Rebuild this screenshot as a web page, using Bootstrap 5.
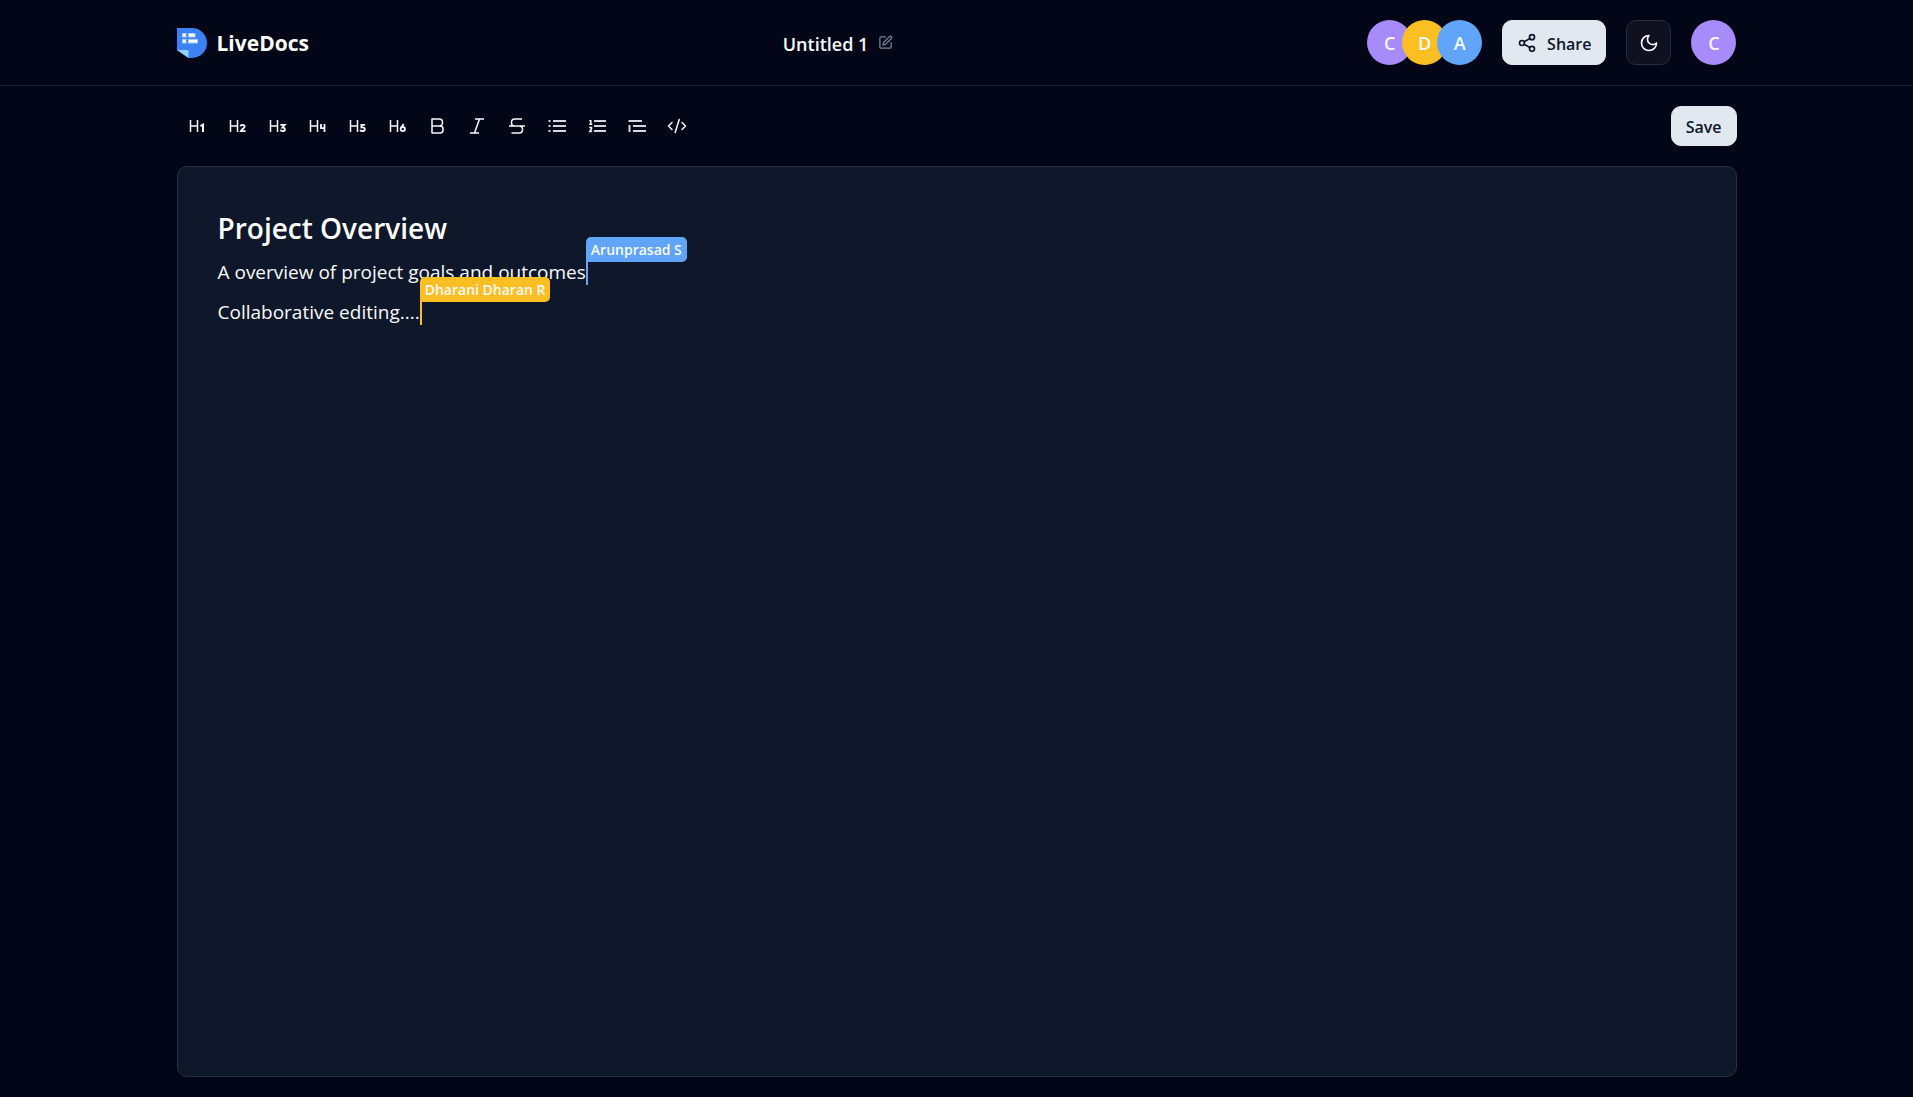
<!DOCTYPE html>
<html lang="en" data-bs-theme="dark">
<head>
<meta charset="utf-8">
<meta name="viewport" content="width=device-width, initial-scale=1">
<title>LiveDocs</title>
<link href="https://cdn.jsdelivr.net/npm/bootstrap@5.3.0/dist/css/bootstrap.min.css" rel="stylesheet">
<style>
  body { background: #020617; color: #f8fafc; font-family: "Open Sans", "Noto Sans", sans-serif; font-size: 18px; }
  svg { display: block; flex: none; }
  .page-wrap { width: 100%; max-width: 1600px; padding: 0 20px; margin: 0 auto; }
  .topbar { border-bottom: 1px solid #1b2031; padding: 20px 0; }
  .toolrow { padding: 20px 0; }
  .gap-md { gap: 20px; }
  .gap-sm { gap: 10px; }
  .brand { color: #fff; font-size: 21px; font-weight: 700; line-height: 30px; }
  .doc-title { font-size: 18px; font-weight: 600; line-height: 30px; }
  .text-drop { padding-top: 2px; }
  .avatar { width: 45px; height: 45px; font-size: 18px; font-weight: 600; line-height: 28px; color: #f8fafc; }
  .avatar + .avatar { margin-left: -10px; }
  .violet { background: #a78bfa; }
  .amber { background: #fbbf24; }
  .azure { background: #60a5fa; }
  .btn { --bs-btn-font-weight: 600; --bs-btn-font-size: 16px; --bs-btn-border-radius: 10px; }
  .btn-pale { --bs-btn-color: #0f172a; --bs-btn-bg: #e2e8f0; --bs-btn-border-color: #e2e8f0; --bs-btn-hover-bg: #cbd5e1; --bs-btn-hover-color: #0f172a; --bs-btn-padding-x: 14px; --bs-btn-padding-y: 0; }
  .btn-share { height: 45px; }
  .btn-save { height: 40px; }
  .btn-theme { width: 45px; height: 45px; --bs-btn-color: #f8fafc; --bs-btn-bg: #0f1120; --bs-btn-border-color: #2a2d3c; }
  .btn-tool { width: 40px; height: 40px; --bs-btn-color: #f8fafc; --bs-btn-hover-bg: #1e293b; --bs-btn-hover-color: #fff; }
  .btn-tool svg { fill: none; stroke: currentColor; stroke-width: 1.5; }
  .btn-tool .bars { stroke: #d6d8de; stroke-width: 2; }
  .shell { min-height: 100vh; }
  .sheet { background: #0f172a; border: 1px solid #283142; border-radius: 10px; padding: 40px; margin-bottom: 20px; outline: 0; }
  .sheet h1 { font-size: 28px; font-weight: 600; line-height: 42px; margin: 0 0 8px; color: #fff; }
  .sheet p { font-size: 19px; line-height: 30px; margin: 0 0 10px; }
  .caret { position: relative; border-left: 2px solid var(--who); }
  .caret-name { position: absolute; left: -2px; bottom: calc(100% - 3px); background: var(--who); color: #f8fafc; font-size: 14px; font-weight: 600; line-height: 25px; padding: 0 5px; border-radius: 5px 5px 5px 0; white-space: nowrap; }
  .who-azure { --who: #60a5fa; }
  .who-amber { --who: #fbbf24; }
</style>
</head>
<body>
<div class="shell d-flex flex-column">
  <header class="topbar">
    <div class="page-wrap d-flex justify-content-between align-items-center">
      <a href="#" class="brand d-flex align-items-center gap-sm text-decoration-none">
        <svg width="30" height="30" viewBox="0 0 30 30" aria-hidden="true">
          <path fill="#3b82f6" d="M0 0H15A15 15 0 0 1 15 30H11.500L0 22Z"/>
          <path fill="#93d0fb" d="M0 22H11.500V30Z"/>
          <path fill="#a9cbfc" d="M5 5h4.500v4.500H5zM11 5h7.500v4.500H11zM5 11h4.500v4.500H5zM11 11h10v4.500H11z"/>
          <path fill="#fff" d="M6 6h2.500v2.500H6zM12 6h5.500v2.500H12zM6 12h2.500v2.500H6zM12 12h8v2.500H12z"/>
        </svg>
        <span>LiveDocs</span>
      </a>
      <div class="d-flex align-items-center gap-sm">
        <span class="doc-title text-drop">Untitled 1</span>
        <button type="button" class="btn p-0 border-0" aria-label="Rename document">
          <svg width="15" height="15" viewBox="0 0 24 24" fill="none" stroke="#7b8799" stroke-width="2" stroke-linecap="round" stroke-linejoin="round"><path d="M12 3H5a2 2 0 0 0-2 2v14a2 2 0 0 0 2 2h14a2 2 0 0 0 2-2v-7"/><path d="M18.400 2.600a2.100 2.100 0 0 1 3 3L12 15l-4 1 1-4Z"/></svg>
        </button>
      </div>
      <div class="d-flex align-items-center gap-md">
        <div class="d-flex">
          <span class="avatar violet rounded-circle d-flex align-items-center justify-content-center">C</span>
          <span class="avatar amber rounded-circle d-flex align-items-center justify-content-center">D</span>
          <span class="avatar azure rounded-circle d-flex align-items-center justify-content-center">A</span>
        </div>
        <button type="button" class="btn btn-pale btn-share d-flex align-items-center gap-sm">
          <svg width="20" height="20" viewBox="0 0 24 24" fill="none" stroke="currentColor" stroke-width="2" stroke-linecap="round" stroke-linejoin="round" aria-hidden="true"><circle cx="18" cy="5" r="3"/><circle cx="6" cy="12" r="3"/><circle cx="18" cy="19" r="3"/><path d="M8.600 13.500l6.800 4M15.400 6.500l-6.800 4"/></svg>
          <span class="text-drop">Share</span>
        </button>
        <button type="button" class="btn btn-theme p-0 d-flex align-items-center justify-content-center" aria-label="Toggle theme">
          <svg width="20" height="20" viewBox="0 0 24 24" fill="none" stroke="currentColor" stroke-width="2" stroke-linecap="round" stroke-linejoin="round"><path d="M12 3a6 6 0 0 0 9 9 9 9 0 1 1-9-9Z"/></svg>
        </button>
        <button type="button" class="avatar violet btn p-0 border-0 rounded-circle" aria-label="Account">C</button>
      </div>
    </div>
  </header>

  <main class="page-wrap d-flex flex-column flex-grow-1">
    <div class="toolrow d-flex justify-content-between align-items-center">
      <div class="d-flex flex-wrap" role="toolbar" aria-label="Formatting">
        <button type="button" class="btn btn-tool p-0 border-0 d-flex align-items-center justify-content-center" aria-label="Heading 1"><svg width="20" height="20" viewBox="0 0 20 20"><path d="M3.500 4v12M10.500 4v12M3.500 10h7"/><path stroke-width="2" d="M13.500 10.200l2.500-1.500V16"/></svg></button>
        <button type="button" class="btn btn-tool p-0 border-0 d-flex align-items-center justify-content-center" aria-label="Heading 2"><svg width="20" height="20" viewBox="0 0 20 20"><path d="M3.500 4v12M10.500 4v12M3.500 10h7"/><path stroke-width="1.800" d="M13.400 10.400c.2-2 4.200-2 4.200.2 0 1.400-2.800 2.800-3.800 4.500h4.800"/></svg></button>
        <button type="button" class="btn btn-tool p-0 border-0 d-flex align-items-center justify-content-center" aria-label="Heading 3"><svg width="20" height="20" viewBox="0 0 20 20"><path d="M3.500 4v12M10.500 4v12M3.500 10h7"/><path stroke-width="1.800" d="M13.400 8.900h4.300l-2.300 2.600c3.600 0 3 3.700.2 3.700-1.300 0-2-.6-2.300-1.400"/></svg></button>
        <button type="button" class="btn btn-tool p-0 border-0 d-flex align-items-center justify-content-center" aria-label="Heading 4"><svg width="20" height="20" viewBox="0 0 20 20"><path d="M3.500 4v12M10.500 4v12M3.500 10h7"/><path stroke-width="1.800" d="M14 8v4.200h4M17.500 8v8"/></svg></button>
        <button type="button" class="btn btn-tool p-0 border-0 d-flex align-items-center justify-content-center" aria-label="Heading 5"><svg width="20" height="20" viewBox="0 0 20 20"><path d="M3.500 4v12M10.500 4v12M3.500 10h7"/><path stroke-width="1.800" d="M18 8.900h-3.600v2.500c4.400-.7 4.400 3.800 1 3.800-1.200 0-1.900-.5-2.200-1.300"/></svg></button>
        <button type="button" class="btn btn-tool p-0 border-0 d-flex align-items-center justify-content-center" aria-label="Heading 6"><svg width="20" height="20" viewBox="0 0 20 20"><path d="M3.500 4v12M10.500 4v12M3.500 10h7"/><path stroke-width="1.800" d="M16.600 8l-2.500 3.700"/><circle cx="15.800" cy="13.100" r="2.100" stroke-width="1.800"/></svg></button>
        <button type="button" class="btn btn-tool p-0 border-0 d-flex align-items-center justify-content-center" aria-label="Bold"><svg width="20" height="20" viewBox="0 0 20 20"><path stroke-linejoin="round" d="M5 3h7.500a3 3 0 0 1 3 3v1a3 3 0 0 1-3 3H5zM5 10h8a3 3 0 0 1 3 3v1a3 3 0 0 1-3 3H5z"/></svg></button>
        <button type="button" class="btn btn-tool p-0 border-0 d-flex align-items-center justify-content-center" aria-label="Italic"><svg width="20" height="20" viewBox="0 0 20 20"><path d="M8 3h9M3 17h9M12.500 3l-5 14"/></svg></button>
        <button type="button" class="btn btn-tool p-0 border-0 d-flex align-items-center justify-content-center" aria-label="Strikethrough"><svg width="20" height="20" viewBox="0 0 20 20"><path d="M15 3H7.500a3 3 0 0 0-3 3v1a3 3 0 0 0 3 3H12.500a3 3 0 0 1 3 3v1a3 3 0 0 1-3 3H4.500M2 10h16"/></svg></button>
        <button type="button" class="btn btn-tool p-0 border-0 d-flex align-items-center justify-content-center" aria-label="Bullet list"><svg width="20" height="20" viewBox="0 0 20 20"><path class="bars" d="M1.500 5h2M1.500 10h2M1.500 15h2M6 5h13M6 10h13M6 15h13"/></svg></button>
        <button type="button" class="btn btn-tool p-0 border-0 d-flex align-items-center justify-content-center" aria-label="Numbered list"><svg width="20" height="20" viewBox="0 0 20 20"><path class="bars" d="M7 5h12M7 10h12M7 15h12"/><path d="M2.300 4.700h1.500V8M2.200 8.200h3M2.200 11.500h2.300v1.200L2.800 15.500h2.400"/></svg></button>
        <button type="button" class="btn btn-tool p-0 border-0 d-flex align-items-center justify-content-center" aria-label="Block quote"><svg width="20" height="20" viewBox="0 0 20 20"><path class="bars" d="M1.500 5H15M6 10h13M6 15h13M2.500 9v7"/></svg></button>
        <button type="button" class="btn btn-tool p-0 border-0 d-flex align-items-center justify-content-center" aria-label="Code"><svg width="20" height="20" viewBox="0 0 20 20"><path stroke-linecap="round" stroke-linejoin="round" d="M5 6.500L1.500 10L5 13.500M15 6.500L18.500 10L15 13.500M12.200 3.500L8.200 16.500"/></svg></button>
      </div>
      <button type="button" class="btn btn-pale btn-save d-flex align-items-center"><span class="text-drop">Save</span></button>
    </div>

    <div class="sheet flex-grow-1" contenteditable="true" role="textbox" aria-multiline="true" aria-label="Document" spellcheck="false">
      <h1>Project Overview</h1>
      <p>A overview of project goals and outcomes<span class="caret who-azure"><span class="caret-name">Arunprasad S</span></span></p>
      <p>Collaborative editing....<span class="caret who-amber"><span class="caret-name">Dharani Dharan R</span></span></p>
    </div>
  </main>
</div>
<script src="https://cdn.jsdelivr.net/npm/bootstrap@5.3.0/dist/js/bootstrap.bundle.min.js"></script>
</body>
</html>
